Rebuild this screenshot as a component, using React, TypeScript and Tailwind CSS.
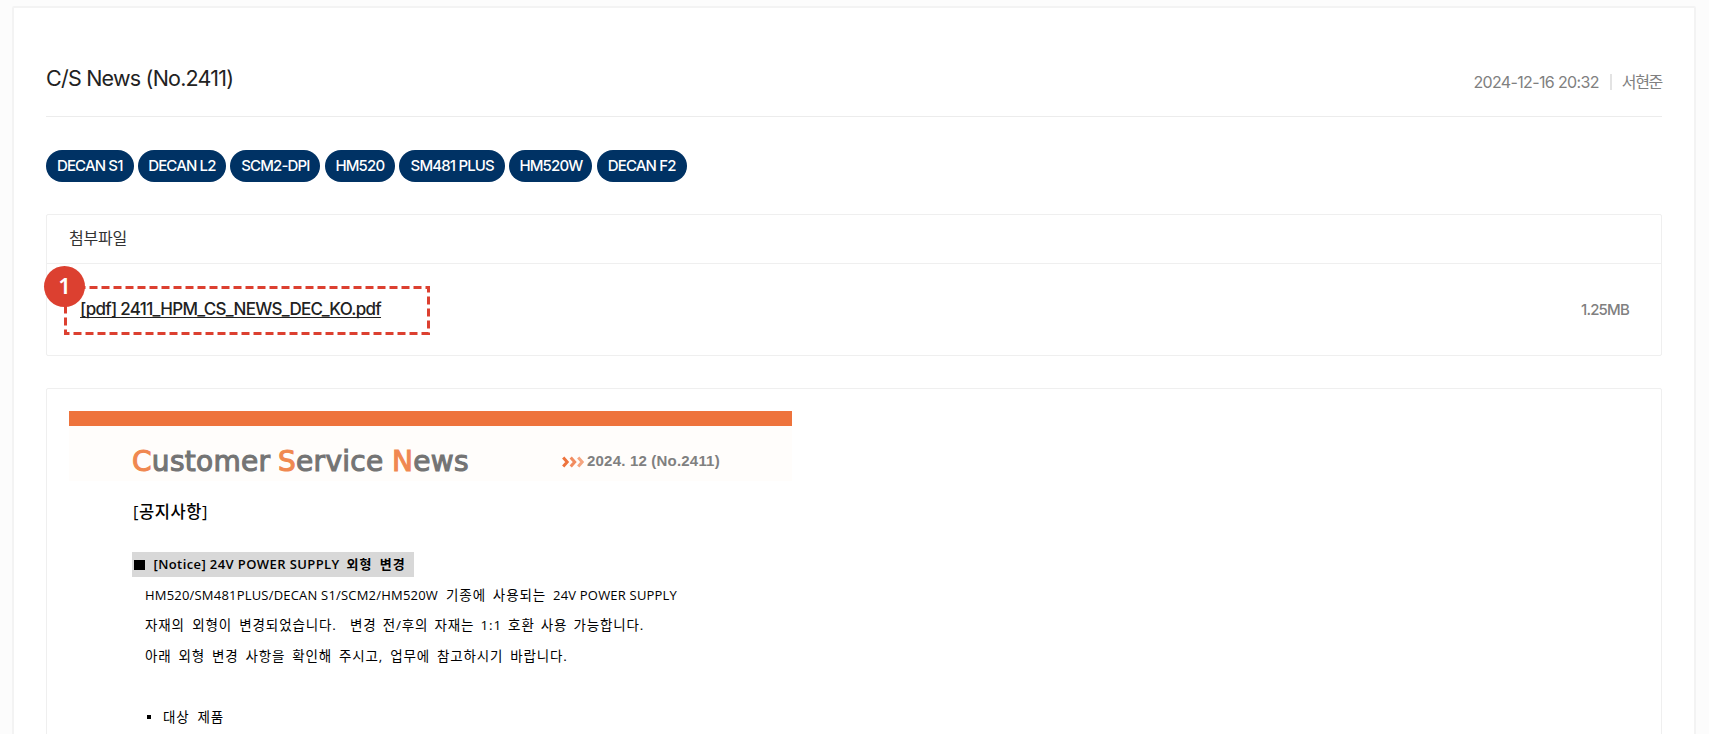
const models = [
  { name: 'DECAN S1', width: 'w-[87.5px]' },
  { name: 'DECAN L2', width: 'w-[88.5px]' },
  { name: 'SCM2-DPI', width: 'w-[90px]' },
  { name: 'HM520', width: 'w-[70.5px]' },
  { name: 'SM481 PLUS', width: 'w-[106px]' },
  { name: 'HM520W', width: 'w-[83px]' },
  { name: 'DECAN F2', width: 'w-[90px]' },
];

const inter = "font-['Inter','Noto_Sans_CJK_KR',sans-serif]";
const korean = "font-['Open_Sans','Noto_Sans_CJK_KR',sans-serif]";

function LogoWord({ initial, rest, className }: { initial: string; rest: string; className: string }) {
  return (
    <span className={`block shrink-0 text-[#747474] [-webkit-text-stroke:1.1px_#747474] ${className}`}>
      <span className="text-[#f08850] [-webkit-text-stroke:1.1px_#f08850]">{initial}</span>
      {rest}
    </span>
  );
}

function Chevrons() {
  return (
    <svg width="23" height="12" viewBox="0 0 23 12" fill="none" strokeWidth="3" className="shrink-0">
      <path d="M1.2 1.5 L5.2 6 L1.2 10.5" stroke="#ee733c" />
      <path d="M8.7 1.5 L12.7 6 L8.7 10.5" stroke="#f18b5e" />
      <path d="M16.2 1.5 L20.2 6 L16.2 10.5" stroke="#f5a580" />
    </svg>
  );
}

function Header() {
  return (
    <header className="flex h-[109px] items-start justify-between border-b border-[#ececec]">
      <h1 className="pt-[56px] text-[21.5px] leading-[28px] tracking-[-0.78px] text-[#222]">C/S News (No.2411)</h1>
      <div className="flex items-center pt-[64px] text-base leading-[20px] text-[#808080]">
        <span className="tracking-[-0.65px]">2024-12-16 20:32</span>
        <span className="mr-[10px] ml-[11px] h-4 w-0.5 bg-[#e3e3e3]" />
        <span className="tracking-[-1.3px]">서현준</span>
      </div>
    </header>
  );
}

function Attachments() {
  return (
    <section className="mt-8 h-[142px] rounded-xs border border-[#efefef]">
      <div className="flex h-[49px] items-center border-b border-[#efefef] pb-0.5 pl-[22px] text-base tracking-[-0.2px] text-[#333]">
        첨부파일
      </div>
      <div className="flex h-[91px] items-center justify-between pt-0.5 pr-8 pl-[17px]">
        <div className="relative flex h-[49px] w-[366px] items-center pl-4">
          <svg className="absolute inset-0" width="366" height="49" fill="none">
            <rect x="1.5" y="1.5" width="363" height="46" stroke="#dc4030" strokeWidth="3" strokeDasharray="8 4" />
          </svg>
          <a className="relative -top-px text-[17px] font-medium tracking-[-0.72px] text-[#222] underline decoration-1 underline-offset-2 [text-decoration-skip-ink:none]">
            [pdf] 2411_HPM_CS_NEWS_DEC_KO.pdf
          </a>
          <span className="absolute -top-5 -left-5 flex size-[41px] items-center justify-center rounded-full bg-[#dc4030] pb-0.5 font-['Noto_Sans',sans-serif] text-[22px] font-semibold text-white">
            1
          </span>
        </div>
        <span className="text-[15px] font-medium tracking-[-0.8px] text-[#808080]">1.25MB</span>
      </div>
    </section>
  );
}

function Newsletter() {
  return (
    <section className="mt-8 h-[400px] rounded-xs border border-[#efefef] pt-[22px] pl-[22px]">
      <div className="h-[70px] w-[723px] bg-[#fffdfb]">
        <div className="h-[15px] bg-[#ee733c]" />
        <div className="flex h-[55px] items-center pt-[16px] pl-[63px]">
          <div className="flex w-[430px] font-['DejaVu_Sans',sans-serif] text-[28px] leading-[34px] tracking-[0.3px]">
            <LogoWord initial="C" rest="ustomer" className="w-[146px]" />
            <LogoWord initial="S" rest="ervice" className="w-[114px]" />
            <LogoWord initial="N" rest="ews" className="w-[90px]" />
          </div>
          <Chevrons />
          <span className="ml-[2px] font-['Liberation_Sans',sans-serif] text-[15px] font-bold tracking-[0.2px] text-[#808080]">
            2024. 12 (No.2411)
          </span>
        </div>
      </div>
      <div className={`pl-[63px] text-black ${korean}`}>
        <h2 className="mt-[19px] pl-px text-[16.5px] leading-[24px] font-medium tracking-[0.6px]">[공지사항]</h2>
        <div className="mt-[28px] flex h-[25px] w-[282px] items-center bg-[#d8d8d8] pt-px pl-[2px] text-[13px] font-semibold whitespace-nowrap">
          <span className="size-[10.5px] bg-black" />
          <span className="ml-[9px] w-[193px] tracking-[0.4px]">[Notice] 24V POWER SUPPLY</span>
          <span className="tracking-[1px] [word-spacing:3px]">외형 변경</span>
        </div>
        <div className="mt-[3px] pl-[13px] text-[13.5px] leading-[30.3px] whitespace-nowrap">
          <p className="flex text-[13px]">
            <span className="w-[301px] tracking-[0.2px]">HM520/SM481PLUS/DECAN S1/SCM2/HM520W</span>
            <span className="w-[107px] text-[13.5px] tracking-[0.9px] [word-spacing:2.5px]">기종에 사용되는</span>
            <span className="tracking-[0.2px]">24V POWER SUPPLY</span>
          </p>
          <p className="flex">
            <span className="w-[205px] tracking-[0.85px] [word-spacing:3px]">자재의 외형이 변경되었습니다.</span>
            <span className="tracking-[0.85px] [word-spacing:1.8px]">변경 전/후의 자재는 1:1 호환 사용 가능합니다.</span>
          </p>
          <p className="tracking-[0.85px] [word-spacing:2.6px]">
            아래 외형 변경 사항을 확인해 주시고, 업무에 참고하시기 바랍니다.
          </p>
          <p className="mt-[31px] flex items-center">
            <span className="ml-[2px] size-1 bg-black" />
            <span className="ml-3 tracking-[0.9px] [word-spacing:3.5px]">대상 제품</span>
          </p>
        </div>
      </div>
    </section>
  );
}

export default function App() {
  return (
    <div className={`h-[734px] overflow-hidden bg-[#fcfcfc] pt-1.5 pr-3 pl-3 antialiased ${inter}`}>
      <main className="h-[800px] w-[1684px] rounded-xs border-2 border-[#f3f3f3] bg-white px-8">
        <Header />
        <ul className="mt-[33px] flex gap-[4.2px]">
          {models.map((m) => (
            <li
              key={m.name}
              className={`flex h-8 shrink-0 items-center justify-center rounded-full bg-[#003264] text-[15px] font-medium tracking-[-0.85px] whitespace-nowrap text-white ${m.width}`}
            >
              {m.name}
            </li>
          ))}
        </ul>
        <Attachments />
        <Newsletter />
      </main>
    </div>
  );
}
